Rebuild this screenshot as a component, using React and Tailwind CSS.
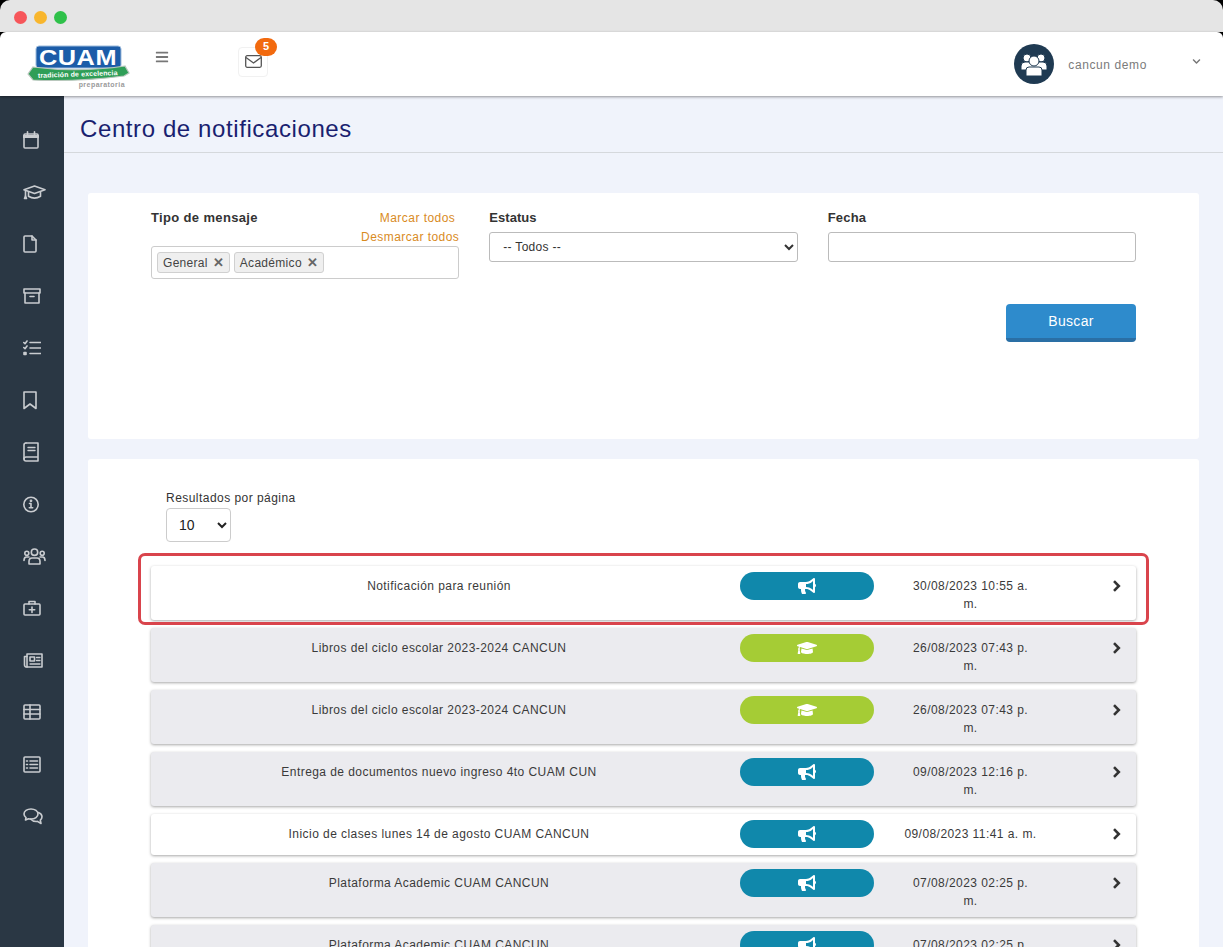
import React from "react";
import { FaBars, FaBullhorn, FaGraduationCap, FaChevronDown } from "react-icons/fa";

const S = ({ w, h, children, fill }) => (
  <svg width={w} height={h} viewBox={`0 0 ${w} ${h}`} fill={fill || "none"} stroke="currentColor" strokeWidth="1.6" strokeLinejoin="round" strokeLinecap="round" className="block">
    {children}
  </svg>
);

const side = [
  <S w={16} h={18}><rect x="1" y="3" width="14" height="14" rx="1" /><path d="M1 5.5h14" strokeWidth="3" /><path d="M4.5 .8v3M11.5 .8v3" /></S>,
  <S w={23} h={15}><path d="M11.5 1 22 4.8 11.5 8.4 1 4.8Z" /><path d="M5.5 7v4.2Q11.5 15 17.5 11.2V7" /><path d="M2.5 5.5V11" /><path d="M1.5 13.5 2.5 11l1 2.5Z" /></S>,
  <S w={14} h={18}><path d="M1 2a1 1 0 0 1 1-1h7l4 4v11a1 1 0 0 1-1 1H2a1 1 0 0 1-1-1Z" /><path d="M9 1v4h4" /></S>,
  <S w={18} h={16}><rect x="1" y="1" width="16" height="4" /><path d="M2 5v10h14V5" /><path d="M7 8.5h4" /></S>,
  <S w={18} h={16}><path d="M.8 2.5 2 3.7 4 1M.8 7.5 2 8.7 4 6" /><rect x="1" y="12.5" width="2" height="2" fill="currentColor" /><path d="M7 2.5h10.5M7 8h10.5M7 13.5h10.5" /></S>,
  <S w={14} h={19}><path d="M1 1h12v16.5L7 13l-6 4.5Z" /></S>,
  <S w={16} h={20}><path d="M3 1h12v14H3a2 2 0 0 0 0 4h12v-4" /><path d="M1 17V3a2 2 0 0 1 2-2" /><path d="M5 5.5h7M5 8.5h7" strokeWidth="1.4" /></S>,
  <S w={16} h={17}><circle cx="8" cy="8.5" r="7.2" /><path d="M8 7.5v4M6.5 7.5H8M6.3 11.8h3.4" /><circle cx="8" cy="4.8" r=".6" fill="currentColor" /></S>,
  <S w={23} h={17}><circle cx="11.5" cy="4.2" r="3.2" /><circle cx="3.8" cy="5.2" r="2" /><circle cx="19.2" cy="5.2" r="2" /><path d="M6 16v-2.5Q6 10 9 10h5q3 0 3 3.5V16Z" /><path d="M1 12.5Q1 9 3.5 9H6M22 12.5Q22 9 19.5 9H17" /></S>,
  <S w={18} h={16}><rect x="1" y="4" width="16" height="11" rx="1" /><path d="M6 4V1.5h6V4" /><path d="M9 7v5.5M6.3 9.7h5.4" /></S>,
  <S w={20} h={15}><path d="M4 1h15v13H4Z" /><path d="M4 3.5H1.5V12a2 2 0 0 0 2.5 2" /><rect x="7" y="4" width="4.5" height="4" /><path d="M13.5 4.5h3.5M13.5 7.5h3.5M7 11h10" strokeWidth="1.3" /></S>,
  <S w={18} h={16}><rect x="1" y="1" width="16" height="14" rx="1" /><path d="M1 5.5h16M1 10h16M7 1v14" /></S>,
  <S w={18} h={17}><rect x="1" y="1" width="16" height="15" rx="1" /><path d="M7 5h7.5M7 8.5h7.5M7 12h7.5M3.5 5h1M3.5 8.5h1M3.5 12h1" /></S>,
  <S w={20} h={17}><path d="M8 1C4 1 1 3.2 1 6c0 1.5.8 2.7 2 3.6L2.5 12l3-1.3c.8.2 1.6.3 2.5.3 4 0 7-2.2 7-5s-3-5-7-5Z" /><path d="M15.5 4.5C17.6 5.4 19 7 19 8.8c0 1.3-.6 2.4-1.7 3.3l.7 3.4-3.6-2.1c-2.8.3-5.4-.7-6.9-2.4" /></S>,
];

const rows = [
  { t: "Notificación para reunión", k: "g", d: "30/08/2023 10:55 a. m.", read: true, mark: true },
  { t: "Libros del ciclo escolar 2023-2024 CANCUN", k: "a", d: "26/08/2023 07:43 p. m." },
  { t: "Libros del ciclo escolar 2023-2024 CANCUN", k: "a", d: "26/08/2023 07:43 p. m." },
  { t: "Entrega de documentos nuevo ingreso 4to CUAM CUN", k: "g", d: "09/08/2023 12:16 p. m." },
  { t: "Inicio de clases lunes 14 de agosto CUAM CANCUN", k: "g", d: "09/08/2023 11:41 a. m.", read: true, one: true },
  { t: "Plataforma Academic CUAM CANCUN", k: "g", d: "07/08/2023 02:25 p. m." },
  { t: "Plataforma Academic CUAM CANCUN", k: "g", d: "07/08/2023 02:25 p. m." },
];

function Logo() {
  return (
    <svg width="104" height="44" viewBox="0 0 104 44" className="block">
      <rect x="9" y="1" width="85" height="22" rx="3" fill="#1c5ca8" stroke="#9dbbdc" />
      <text x="51" y="20" textAnchor="middle" fontFamily="'Liberation Sans', sans-serif" fontWeight="700" fontSize="22" fill="#fff" textLength="78" lengthAdjust="spacingAndGlyphs">CUAM</text>
      <path d="M1 29 L6 22 Q50 28 98 21 L102 28 L97 31 Q50 37 6 35 Z" fill="#2f9e57" stroke="#b9c7bd" strokeWidth="1.2" />
      <text x="51" y="31.5" textAnchor="middle" fontFamily="'Liberation Sans', sans-serif" fontWeight="700" fontSize="7" fill="#fff" textLength="80" transform="rotate(-2 51 30)">tradición de excelencia</text>
      <text x="98" y="42" textAnchor="end" fontFamily="'Liberation Sans', sans-serif" fontWeight="700" fontSize="7" fill="#9a9a9a">preparatoria</text>
    </svg>
  );
}

function Tag({ children }) {
  return (
    <span className="flex items-center h-[21px] px-[5px] gap-[5px] bg-[#efefef] border border-[#d0d0d0] rounded-[3px] text-[#444] tracking-[0.3px]">
      {children}
      <span className="text-[#666] font-bold text-[13px] leading-none tracking-normal">✕</span>
    </span>
  );
}

function Row({ t, k, d, read, mark, one }) {
  return (
    <div className={`relative grid grid-cols-[589px_134px_163px_1fr] rounded-[3px] pt-[6px] pb-[7px] tracking-[0.44px] text-[#3a3a3a] shadow-[0_1px_3px_rgba(0,0,0,0.35)] ${read ? "bg-white" : "bg-[#ebebef]"}`}>
      {mark && <div className="absolute -left-[13px] -right-[13px] -top-[13px] -bottom-[5px] border-[3px] border-[#d9444c] rounded-[7px]" />}
      <div className="pl-[12px] pr-[25px] pt-[5px] text-center leading-[18px]">{t}</div>
      <div className={`h-[28px] rounded-full flex items-center justify-center text-white text-[18px] ${k === "g" ? "bg-[#1088ab]" : "bg-[#a5cc35]"}`}>
        {k === "g" ? <FaBullhorn /> : <FaGraduationCap className="text-[20px]" />}
      </div>
      <div className="pt-[5px] pl-[30px] flex justify-center">
        <div className={`text-center leading-[18px] ${one ? "whitespace-nowrap" : "w-[124px]"}`}>{d}</div>
      </div>
      <div className="pt-[8px] pl-[75px] text-[#333]">
        <svg width="9" height="12" viewBox="0 0 9 12" fill="none" stroke="currentColor" strokeWidth="2.6" className="block">
          <path d="M2 1.2 6.8 6 2 10.8" />
        </svg>
      </div>
    </div>
  );
}

export default function App() {
  return (
    <div className="h-[947px] w-[1223px] overflow-hidden bg-black flex flex-col font-['Liberation_Sans',Arial,sans-serif] text-[12px] tracking-[0.46px] text-[#333]">
      <div className="h-[32px] shrink-0 bg-[#e5e5e5] rounded-t-[10px] flex items-center gap-[7px] pl-[14px] pt-[2px]">
        <span className="w-[13px] h-[13px] rounded-full bg-[#f6565a]" />
        <span className="w-[13px] h-[13px] rounded-full bg-[#f8b62d]" />
        <span className="w-[13px] h-[13px] rounded-full bg-[#2fc14a]" />
      </div>
      <header className="relative z-10 h-[64px] shrink-0 bg-white rounded-t-[6px] shadow-[0_1px_3px_rgba(0,0,0,0.4)] flex items-center">
        <div className="ml-[27px] mt-[5px]"><Logo /></div>
        <FaBars className="ml-[24px] mb-[14px] text-[#777] text-[14px]" />
        <div className="relative ml-[69px] mb-[5px] w-[30px] h-[30px] border border-[#f1f1f1] rounded-[4px] flex items-center justify-center text-[#555]">
          <svg width="17" height="13" viewBox="0 0 17 13" fill="none" stroke="currentColor" strokeWidth="1.3" className="block">
            <rect x=".7" y=".7" width="15.6" height="11.6" rx="1.5" />
            <path d="M1 2.5 8.5 8 16 2.5" />
          </svg>
          <span className="absolute -top-[10px] -right-[10px] w-[22px] h-[18px] rounded-full bg-[#f26a0f] text-white font-bold text-[11px] tracking-normal flex items-center justify-center">5</span>
        </div>
        <div className="ml-auto flex items-center">
          <div className="w-[40px] h-[40px] rounded-full bg-[#1f3a52] flex items-center justify-center">
            <svg width="28" height="26" viewBox="0 0 28 26" fill="#fff" stroke="#1f3a52" strokeWidth="1" className="block">
              <circle cx="7" cy="7" r="4" />
              <circle cx="21" cy="7" r="4" />
              <path d="M1 19v-4q0-4 4-4h18q4 0 4 4v4Z" />
              <circle cx="14" cy="10" r="5" />
              <path d="M6 25v-6q0-3 3-3h10q3 0 3 3v6Z" />
            </svg>
          </div>
          <span className="ml-[14px] mt-[1px] text-[#7b7b7b] tracking-[0.6px]">cancun demo</span>
          <FaChevronDown className="ml-[45px] mr-[22px] mb-[6px] text-[#777] text-[9px]" />
        </div>
      </header>
      <div className="flex-1 flex min-h-0">
        <aside className="w-[64px] shrink-0 bg-[#2a3744] pt-[18px] pl-[23px] flex flex-col items-start text-[#c9ccd0]">
          {side.map((ic, i) => (
            <div key={i} className="h-[52px] flex items-center shrink-0">{ic}</div>
          ))}
        </aside>
        <main className="flex-1 bg-[#f0f3fb] min-w-0">
          <div className="h-[57px] border-b border-[#d5d8dc] pl-[16px] pt-[10px] flex items-center text-[24px] tracking-[0.6px] text-[#1a1f70]">Centro de notificaciones</div>
          <section className="mt-[40px] ml-[24px] mr-[24px] h-[246px] bg-white rounded-[3px] pl-[63px] pr-[63px] pt-[16px]">
            <div className="grid grid-cols-3 gap-x-[30px]">
              <div>
                <div className="relative h-[37px]">
                  <span className="font-bold text-[13px] tracking-[0.35px] leading-[17px] block">Tipo de mensaje</span>
                  <div className="absolute right-0 top-0 text-right text-[#d98b1e] leading-[19px]">
                    <div className="pr-[4px]">Marcar todos</div>
                    <div>Desmarcar todos</div>
                  </div>
                </div>
                <div className="h-[33px] border border-[#ccc] rounded-[3px] flex items-center gap-[4px] pl-[5px]">
                  <Tag>General</Tag>
                  <Tag>Académico</Tag>
                </div>
              </div>
              <div>
                <div className="font-bold h-[23px] text-[13px] tracking-[0.05px] leading-[17px]">Estatus</div>
                <select className="w-full h-[30px] border border-[#bbb] rounded-[3px] bg-white pl-[9px] text-[12px] tracking-[0.3px]">
                  <option>-- Todos --</option>
                </select>
              </div>
              <div>
                <div className="font-bold h-[23px] text-[13px] tracking-[0.2px] leading-[17px]">Fecha</div>
                <input className="w-full h-[30px] border border-[#bbb] rounded-[3px] bg-white" />
              </div>
            </div>
            <div className="flex justify-end mt-[25px]">
              <button className="w-[130px] h-[38px] bg-[#2e8bcc] border-b-[4px] border-[#2a6fa5] rounded-[4px] text-white text-[14px] tracking-[0.3px]">Buscar</button>
            </div>
          </section>
          <section className="mt-[20px] mx-[24px] bg-white rounded-t-[3px] pl-[63px] pr-[63px] pt-[32px] h-[600px]">
            <div className="pl-[15px]">
              <div className="leading-[15px]">Resultados por página</div>
              <select className="mt-[2px] w-[65px] h-[34px] border border-[#ccc] rounded-[4px] bg-white pl-[8px] text-[14px] tracking-normal text-[#222]">
                <option>10</option>
              </select>
            </div>
            <div className="mt-[24px] flex flex-col gap-[8px]">
              {rows.map((r, i) => <Row key={i} {...r} />)}
            </div>
          </section>
        </main>
      </div>
    </div>
  );
}
